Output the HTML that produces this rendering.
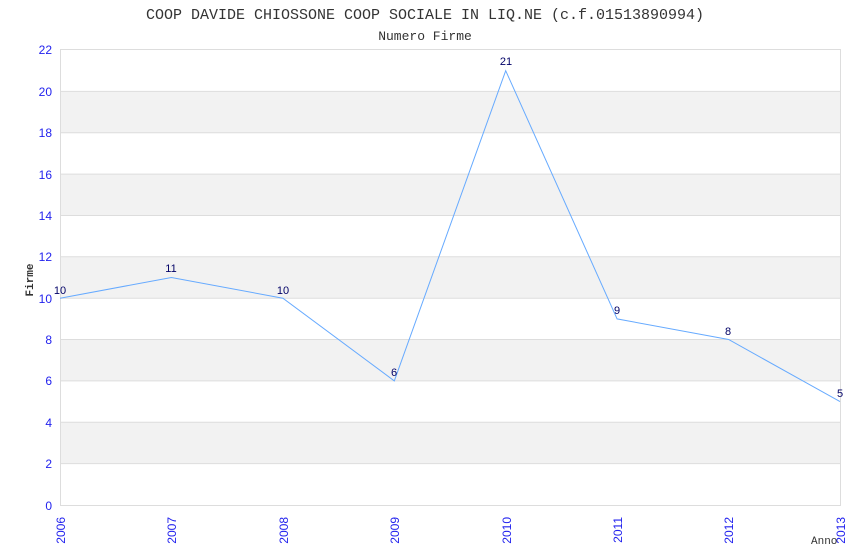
<!DOCTYPE html>
<html><head><style>body{margin:0;background:#fff}svg{display:block}</style></head><body>
<svg width="850" height="550" xmlns="http://www.w3.org/2000/svg">
<rect width="850" height="550" fill="#fff"/>
<text x="425" y="19" text-anchor="middle" font-family="Liberation Mono, monospace" font-size="15" fill="#333">COOP DAVIDE CHIOSSONE COOP SOCIALE IN LIQ.NE (c.f.01513890994)</text>
<text x="425" y="40" text-anchor="middle" font-family="Liberation Mono, monospace" font-size="13" fill="#333">Numero Firme</text>
<g fill="#f2f2f2">
<rect x="60" y="91.4" width="780" height="41.4"/>
<rect x="60" y="174.1" width="780" height="41.4"/>
<rect x="60" y="256.8" width="780" height="41.4"/>
<rect x="60" y="339.5" width="780" height="41.4"/>
<rect x="60" y="422.3" width="780" height="41.4"/>
</g>
<g stroke="#ddd" stroke-width="1">
<line x1="60" y1="49.5" x2="840" y2="49.5"/>
<line x1="60" y1="91.4" x2="840" y2="91.4"/>
<line x1="60" y1="132.8" x2="840" y2="132.8"/>
<line x1="60" y1="174.1" x2="840" y2="174.1"/>
<line x1="60" y1="215.5" x2="840" y2="215.5"/>
<line x1="60" y1="256.8" x2="840" y2="256.8"/>
<line x1="60" y1="298.2" x2="840" y2="298.2"/>
<line x1="60" y1="339.5" x2="840" y2="339.5"/>
<line x1="60" y1="380.9" x2="840" y2="380.9"/>
<line x1="60" y1="422.3" x2="840" y2="422.3"/>
<line x1="60" y1="463.6" x2="840" y2="463.6"/>
<line x1="60" y1="505.5" x2="840" y2="505.5"/>
<line x1="60.5" y1="49" x2="60.5" y2="506"/>
<line x1="840.5" y1="49" x2="840.5" y2="506"/>
</g>
<g font-family="Liberation Sans, sans-serif" font-size="12" fill="#2222ee" text-anchor="end">
<text x="52" y="54">22</text><text x="52" y="96">20</text><text x="52" y="137">18</text><text x="52" y="179">16</text><text x="52" y="220">14</text><text x="52" y="261">12</text><text x="52" y="303">10</text><text x="52" y="344">8</text><text x="52" y="385">6</text><text x="52" y="427">4</text><text x="52" y="468">2</text><text x="52" y="510">0</text>
</g>
<g font-family="Liberation Sans, sans-serif" font-size="12" fill="#2222ee" text-anchor="end">
<text transform="translate(65,517) rotate(-90)">2006</text>
<text transform="translate(176,517) rotate(-90)">2007</text>
<text transform="translate(288,517) rotate(-90)">2008</text>
<text transform="translate(399,517) rotate(-90)">2009</text>
<text transform="translate(511,517) rotate(-90)">2010</text>
<text transform="translate(622,517) rotate(-90)">2011</text>
<text transform="translate(733,517) rotate(-90)">2012</text>
<text transform="translate(845,517) rotate(-90)">2013</text>
</g>
<text transform="translate(33,280) rotate(-90)" text-anchor="middle" font-family="Liberation Mono, monospace" font-size="11" font-weight="bold" fill="#333">Firme</text>
<text x="811" y="544" font-family="Liberation Mono, monospace" font-size="11" fill="#333">Anno</text>
<polyline fill="none" stroke="#66aaff" stroke-width="1" points="60,298.2 171.4,277.5 282.9,298.2 394.3,380.9 505.7,70.7 617.1,318.9 728.6,339.5 840,401.6"/>
<g font-family="Liberation Sans, sans-serif" font-size="11" fill="#000066" text-anchor="middle">
<text x="60" y="294">10</text><text x="171" y="272">11</text><text x="283" y="294">10</text><text x="394" y="376">6</text><text x="506" y="65">21</text><text x="617" y="314">9</text><text x="728" y="335">8</text><text x="840" y="397">5</text>
</g>
</svg>
</body></html>
